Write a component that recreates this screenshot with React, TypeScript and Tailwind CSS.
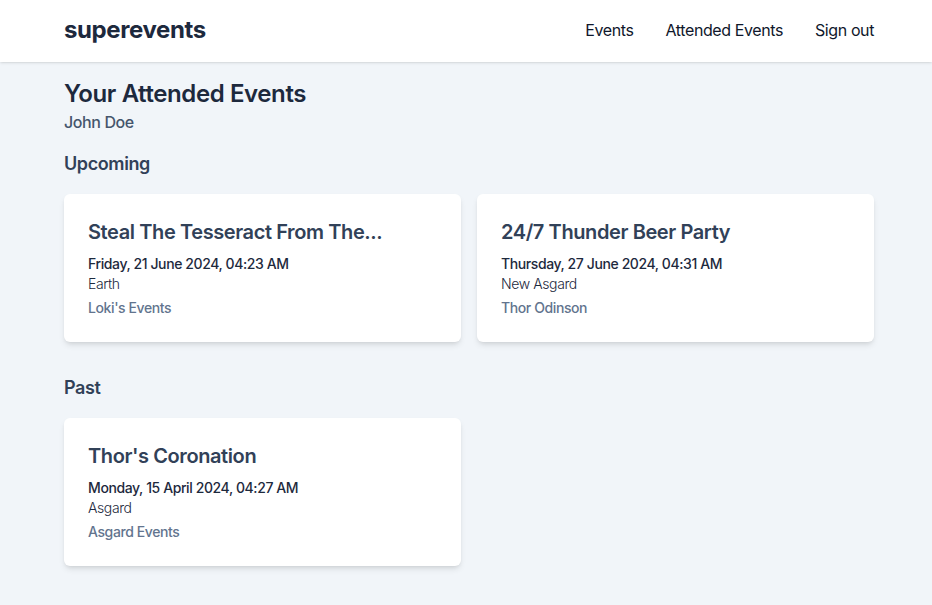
type EventItem = {
  title: string;
  date: string;
  place: string;
  organizer: string;
};

const upcoming: EventItem[] = [
  {
    title: "Steal The Tesseract From The...",
    date: "Friday, 21 June 2024, 04:23 AM",
    place: "Earth",
    organizer: "Loki's Events",
  },
  {
    title: "24/7 Thunder Beer Party",
    date: "Thursday, 27 June 2024, 04:31 AM",
    place: "New Asgard",
    organizer: "Thor Odinson",
  },
];

const past: EventItem[] = [
  {
    title: "Thor's Coronation",
    date: "Monday, 15 April 2024, 04:27 AM",
    place: "Asgard",
    organizer: "Asgard Events",
  },
];

function EventCard({ event }: { event: EventItem }) {
  return (
    <a href="#" className="block rounded-md bg-white p-6 shadow-md">
      <h3 className="text-xl font-semibold text-slate-700">{event.title}</h3>
      <p className="mt-2 text-sm font-medium text-slate-800">{event.date}</p>
      <p className="text-sm font-light text-slate-800">{event.place}</p>
      <p className="mt-1 text-sm font-medium text-slate-500">{event.organizer}</p>
    </a>
  );
}

function EventSection({ title, events }: { title: string; events: EventItem[] }) {
  return (
    <section>
      <h2 className="text-lg font-semibold text-slate-700">{title}</h2>
      <div className="mt-4 grid grid-cols-2 gap-4">
        {events.map((event) => (
          <EventCard key={event.title} event={event} />
        ))}
      </div>
    </section>
  );
}

export default function App() {
  return (
    <div className="min-h-screen bg-slate-100 font-['Inter',sans-serif] tracking-tight text-slate-800">
      <header className="bg-white shadow">
        <div className="flex items-center justify-between pt-3 pr-[58px] pb-[14px] pl-16">
          <a href="#" className="text-2xl leading-9 font-bold">
            superevents
          </a>
          <nav className="flex gap-8 text-slate-900">
            <a href="#">Events</a>
            <a href="#">Attended Events</a>
            <button type="button" className="tracking-tight">Sign out</button>
          </nav>
        </div>
      </header>
      <main className="flex flex-col pt-4 pr-[58px] pb-8 pl-16">
        <h1 className="text-2xl font-semibold">Your Attended Events</h1>
        <p className="font-medium text-slate-600">John Doe</p>
        <div className="mt-4 flex flex-col gap-8">
          <EventSection title="Upcoming" events={upcoming} />
          <EventSection title="Past" events={past} />
        </div>
      </main>
    </div>
  );
}
